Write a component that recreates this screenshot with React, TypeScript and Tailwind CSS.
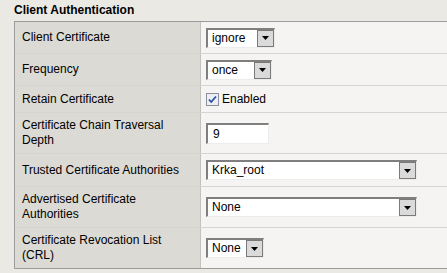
import React from "react";

type Row = {
  label: string;
  h: string;
  value: React.ReactNode;
};

function Arrow() {
  return (
    <svg width="7" height="4" viewBox="0 0 7 4">
      <path d="M0 0H7L3.5 4Z" fill="#000" />
    </svg>
  );
}

function Select({ value, w }: { value: string; w: string }) {
  return (
    <div
      className={`flex h-[20px] ${w} bg-white border-t-2 border-l-2 border-t-[#7f7f7f] border-l-[#7f7f7f] border-r border-b border-r-[#ececec] border-b-[#ececec]`}
    >
      <span className="flex-1 pl-[4px] leading-[17px] text-[12px] text-black whitespace-nowrap overflow-hidden">
        {value}
      </span>
      <div className="w-[17px] h-[17px] border border-[#7a7a7a] bg-[#dadada] flex items-center justify-center">
        <Arrow />
      </div>
    </div>
  );
}

function Checkbox() {
  return (
    <svg width="13" height="13" viewBox="0 0 13 13">
      <rect x="0.5" y="0.5" width="12" height="12" fill="#eceef4" stroke="#8a8f9c" />
      <path d="M3 6.5L5.2 9L10 3.5" fill="none" stroke="#2a4ea6" strokeWidth="1.8" />
    </svg>
  );
}

export default function App() {
  const rows: Row[] = [
    { label: "Client Certificate", h: "h-[32px]", value: <Select value="ignore" w="w-[69px]" /> },
    { label: "Frequency", h: "h-[32px]", value: <Select value="once" w="w-[66px]" /> },
    {
      label: "Retain Certificate",
      h: "h-[27px]",
      value: (
        <div className="flex items-center gap-[3px]">
          <Checkbox />
          <span className="text-[12px] text-black leading-[14px]">Enabled</span>
        </div>
      ),
    },
    {
      label: "Certificate Chain Traversal Depth",
      h: "h-[41px]",
      value: (
        <div className="h-[21px] w-[63px] bg-white border-t-2 border-l-2 border-t-[#7f7f7f] border-l-[#7f7f7f] border-r border-b border-r-[#ececec] border-b-[#ececec] pl-[5px] text-[12px] leading-[18px] text-black">
          9
        </div>
      ),
    },
    { label: "Trusted Certificate Authorities", h: "h-[33px]", value: <Select value="Krka_root" w="w-[211px]" /> },
    { label: "Advertised Certificate Authorities", h: "h-[41px]", value: <Select value="None" w="w-[211px]" /> },
    { label: "Certificate Revocation List (CRL)", h: "h-[40px]", value: <Select value="None" w="w-[58px]" /> },
  ];

  return (
    <div className="w-[447px] h-[273px] bg-[#ebe9e4] overflow-hidden font-['Liberation_Sans',Arial,sans-serif]">
      <div className="h-[21px] pt-[3px] pl-[14px] text-[12px] leading-[14px] font-bold text-black">
        Client Authentication
      </div>
      <div className="ml-[14px] border-l border-t border-b border-[#9c9c9c]">
        {rows.map((r, i) => (
          <div
            key={r.label}
            className={`flex ${r.h} ${i < rows.length - 1 ? "border-b border-[#d6d4d0]" : ""}`}
          >
            <div className="w-[186px] shrink-0 bg-[#dcdad5] border-r border-[#c3c1bc] flex items-center pl-[7px] pr-[8px] text-[12px] leading-[15px] text-black">
              {r.label}
            </div>
            <div className="flex-1 bg-[#f5f4f2] flex items-center pl-[5px]">{r.value}</div>
          </div>
        ))}
      </div>
    </div>
  );
}
